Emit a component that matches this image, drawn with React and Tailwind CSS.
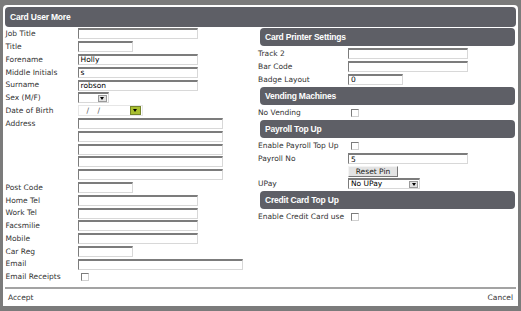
import React from 'react';

const TXT = "font-['DejaVu_Sans',Verdana,sans-serif] text-[7.5px] leading-none whitespace-nowrap";
const BOX = 'h-[11px] bg-white border border-t-2 border-t-[#7c7c7c] border-l-[#7c7c7c] border-r-[#d8d8d8] border-b-[#d8d8d8]';

const Arrow = () => (
  <span className="w-0 h-0 border-l-[2.5px] border-r-[2.5px] border-t-[3px] border-l-transparent border-r-transparent border-t-black" />
);

function TextBox({ w, value }) {
  return (
    <div className={`${BOX} ${w} flex items-center px-[2px] ${TXT} text-black`}>{value}</div>
  );
}

function Check() {
  return (
    <div className="ml-[3px] w-[8px] h-[8px] bg-white border border-t-[#7c7c7c] border-l-[#7c7c7c] border-r-[#d0d0d0] border-b-[#d0d0d0]" />
  );
}

function Select({ w, value }) {
  return (
    <div className={`${BOX} ${w} flex items-center justify-between pl-[2px] pr-[1px] ${TXT} text-black`}>
      <span>{value}</span>
      <span className="w-[9px] h-[7px] bg-[#e2e2e2] border border-[#9a9a9a] flex items-center justify-center">
        <Arrow />
      </span>
    </div>
  );
}

function DateBox() {
  return (
    <div className={`h-[11px] w-[65px] border border-[#e6e6e6] flex items-center justify-between pl-[8px] pr-[1px] ${TXT} text-[#555]`}>
      <span className="tracking-[3px]">/ /</span>
      <span className="w-[11px] h-[9px] bg-[#a9bf30] border border-[#74842a] flex items-center justify-center">
        <Arrow />
      </span>
    </div>
  );
}

function Row({ label, labelW, children }) {
  return (
    <div className="h-[12.8px] flex items-center">
      <div className={`${labelW} ${TXT} text-[#333]`}>{label}</div>
      {children}
    </div>
  );
}

function Bar({ title, className = '' }) {
  return (
    <div className={`h-[18px] rounded-[4px] bg-[#5e5f66] flex items-center px-[5px] text-white font-bold text-[8.5px] tracking-[-0.2px] font-['Liberation_Sans',Arial,sans-serif] ${className}`}>
      {title}
    </div>
  );
}

const LEFT = [
  { label: 'Job Title', el: <TextBox w="w-[120px]" /> },
  { label: 'Title', el: <TextBox w="w-[55px]" /> },
  { label: 'Forename', el: <TextBox w="w-[120px]" value="Holly" /> },
  { label: 'Middle Initials', el: <TextBox w="w-[120px]" value="s" /> },
  { label: 'Surname', el: <TextBox w="w-[120px]" value="robson" /> },
  { label: 'Sex (M/F)', el: <Select w="w-[31px]" /> },
  { label: 'Date of Birth', el: <DateBox /> },
  { label: 'Address', el: <TextBox w="w-[145px]" /> },
  { label: '', el: <TextBox w="w-[145px]" /> },
  { label: '', el: <TextBox w="w-[145px]" /> },
  { label: '', el: <TextBox w="w-[145px]" /> },
  { label: '', el: <TextBox w="w-[145px]" /> },
  { label: 'Post Code', el: <TextBox w="w-[55px]" /> },
  { label: 'Home Tel', el: <TextBox w="w-[120px]" /> },
  { label: 'Work Tel', el: <TextBox w="w-[120px]" /> },
  { label: 'Facsmilie', el: <TextBox w="w-[120px]" /> },
  { label: 'Mobile', el: <TextBox w="w-[120px]" /> },
  { label: 'Car Reg', el: <TextBox w="w-[55px]" /> },
  { label: 'Email', el: <TextBox w="w-[165px]" /> },
  { label: 'Email Receipts', el: <Check /> },
];

export default function App() {
  return (
    <div className="w-[521px] h-[311px] bg-[#7b7b7b] pl-[3px] pt-[5px] overflow-hidden">
      <div className="w-[515px] h-[301px] bg-white rounded-t-[4px] flex flex-col">
        {/* Dialog title */}
        <div className="mx-[2px] mt-[2px]">
          <div className="h-[20px] rounded-[4px] bg-[#5e5f66] flex items-center px-[5px] text-white font-bold text-[8.5px] tracking-[-0.2px] font-['Liberation_Sans',Arial,sans-serif]">
            Card User More
          </div>
        </div>

        <div className="flex-1 flex">
          {/* Left column */}
          <div className="w-[255px] pl-[2.5px] pt-[0.5px]">
            {LEFT.map((r, i) => (
              <Row key={i} label={r.label} labelW="w-[72px]">
                {r.el}
              </Row>
            ))}
          </div>

          {/* Right column */}
          <div className="flex-1 pr-[3px] pt-[1px]">
            <Bar title="Card Printer Settings" className="ml-[2px]" />
            <div className="pt-[1.5px]">
              <Row label="Track 2" labelW="w-[90px]"><TextBox w="w-[120px]" /></Row>
              <Row label="Bar Code" labelW="w-[90px]"><TextBox w="w-[120px]" /></Row>
              <Row label="Badge Layout" labelW="w-[90px]"><TextBox w="w-[55px]" value="0" /></Row>
            </div>

            <Bar title="Vending Machines" className="ml-[2px] mt-[1px]" />
            <div className="pt-[1.5px]">
              <Row label="No Vending" labelW="w-[90px]"><Check /></Row>
            </div>

            <Bar title="Payroll Top Up" className="ml-[2px] mt-[1px]" />
            <div className="pt-[1.5px]">
              <Row label="Enable Payroll Top Up" labelW="w-[90px]"><Check /></Row>
              <Row label="Payroll No" labelW="w-[90px]"><TextBox w="w-[120px]" value="5" /></Row>
              <div className="h-[12px] pl-[90px] flex items-center">
                <button className={`h-[11px] w-[50px] bg-[#e3e3e3] border border-t-[#f4f4f4] border-l-[#f4f4f4] border-r-[#777] border-b-[#777] ${TXT} text-[#222]`}>
                  Reset Pin
                </button>
              </div>
              <Row label="UPay" labelW="w-[90px]"><Select w="w-[72px]" value="No UPay" /></Row>
            </div>

            <Bar title="Credit Card Top Up" className="ml-[2px] mt-[1px]" />
            <div className="pt-[1.5px]">
              <Row label="Enable Credit Card use" labelW="w-[90px]"><Check /></Row>
            </div>
          </div>
        </div>

        {/* Footer */}
        <div className="mx-[2px] border-t-2 border-[#a3a3a3] h-[19px] flex items-center justify-between px-[3px]">
          <span className={`${TXT} text-[#333]`}>Accept</span>
          <span className={`${TXT} text-[#333]`}>Cancel</span>
        </div>
      </div>
    </div>
  );
}
